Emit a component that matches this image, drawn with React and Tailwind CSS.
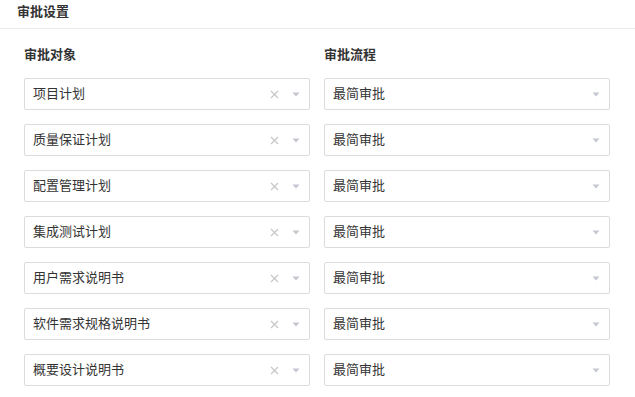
import React from "react";

const rows = [
  "项目计划",
  "质量保证计划",
  "配置管理计划",
  "集成测试计划",
  "用户需求说明书",
  "软件需求规格说明书",
  "概要设计说明书",
];

const font = { fontFamily: '"Noto Sans CJK SC", "Noto Sans", sans-serif' };

function Arrow() {
  return (
    <svg width="8" height="5" viewBox="0 0 8 5" className="shrink-0">
      <path d="M0.5 0.5 L7.5 0.5 L4 4.5 Z" fill="#c4c7cf" />
    </svg>
  );
}

function Clear() {
  return (
    <svg width="9" height="9" viewBox="0 0 9 9" className="shrink-0">
      <path d="M1 1 L8 8 M8 1 L1 8" stroke="#c8c8c8" strokeWidth="1.3" />
    </svg>
  );
}

function Select({ value, clearable }) {
  return (
    <div className="flex h-[32px] items-center rounded-[2px] border border-[#dcdcdc] bg-white pl-[8px] pr-[9px]">
      <span className="flex-1 pb-[3px] text-[13px] leading-[20px] text-[#333]">{value}</span>
      {clearable && (
        <span className="mr-[13px] flex items-center">
          <Clear />
        </span>
      )}
      <Arrow />
    </div>
  );
}

export default function App() {
  return (
    <div className="h-[397px] w-[635px] overflow-hidden bg-white" style={font}>
      <div className="h-[29px] border-b border-[#ebebeb] pl-[17px] pt-[1px] text-[13px] font-bold leading-[20px] text-[#333]">
        审批设置
      </div>
      <div className="grid grid-cols-[286px_286px] gap-x-[14px] pl-[24px] pt-[15px]">
        <div className="text-[13px] font-bold leading-[20px] text-[#333]">审批对象</div>
        <div className="text-[13px] font-bold leading-[20px] text-[#333]">审批流程</div>
      </div>
      <div className="mt-[14px] grid grid-cols-[286px_286px] gap-x-[14px] gap-y-[14px] pl-[24px]">
        {rows.map((r) => (
          <React.Fragment key={r}>
            <Select value={r} clearable />
            <Select value="最简审批" />
          </React.Fragment>
        ))}
      </div>
    </div>
  );
}
